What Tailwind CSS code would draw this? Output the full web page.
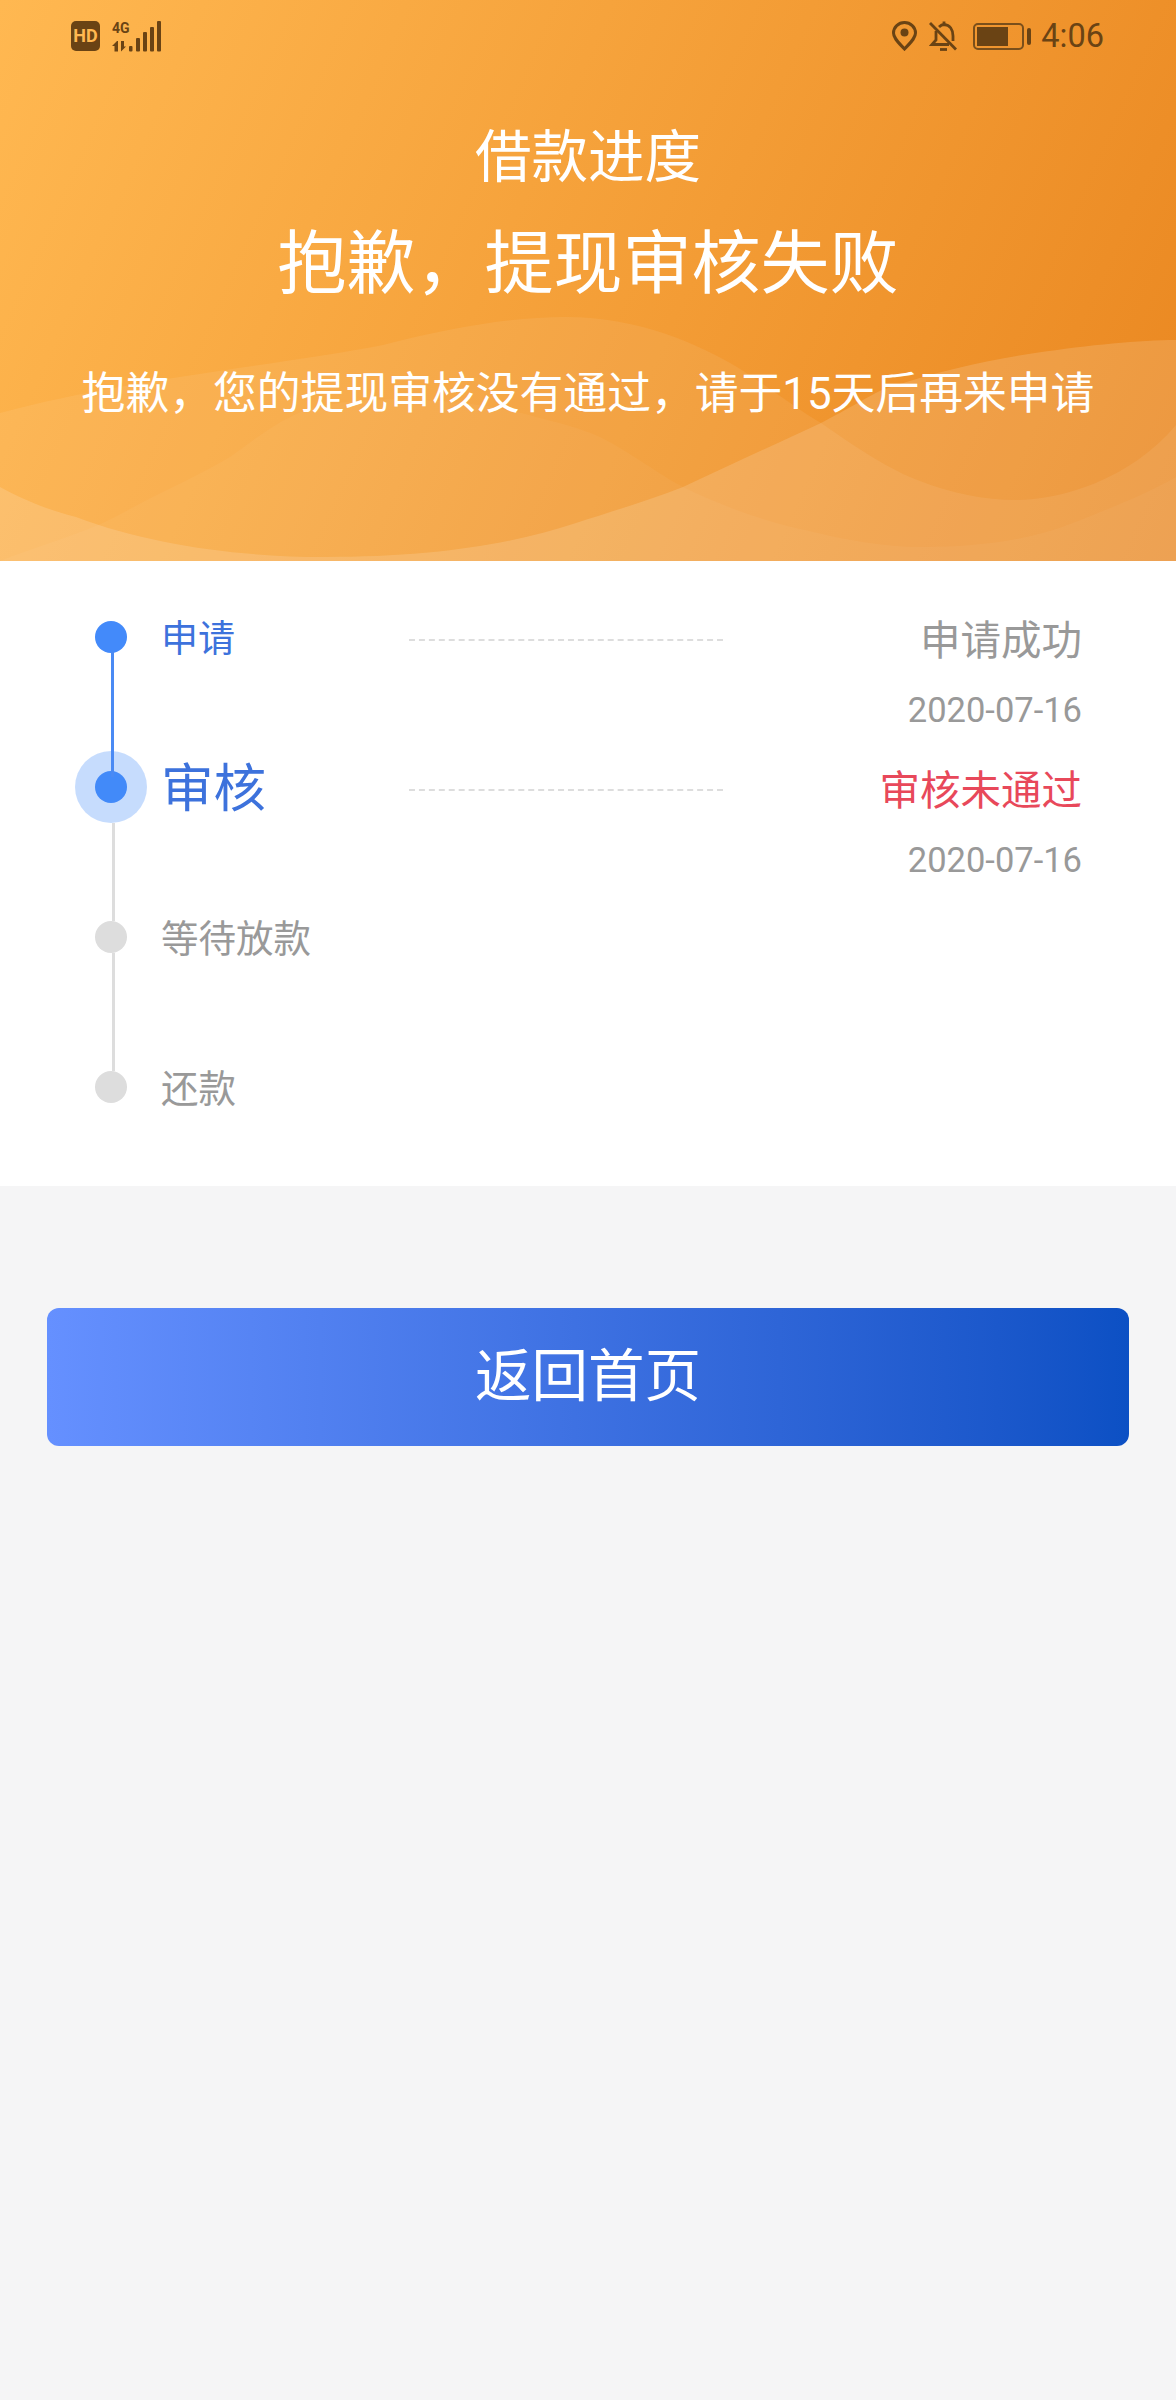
<!DOCTYPE html>
<html>
<head>
<meta charset="utf-8">
<script src="https://cdn.jsdelivr.net/npm/@tailwindcss/browser@4"></script>
</head>
<body class="bg-[#f5f5f6] font-['Roboto','Noto_Sans_CJK_SC',sans-serif]">
<div class="w-[1176px] h-[2400px] flex flex-col">

    <!-- header -->
    <div class="relative h-[561px] overflow-hidden bg-linear-[114deg] from-[#ffb851] to-[#ea8720] shrink-0">
        <svg class="absolute inset-0" width="1176" height="561" viewBox="0 0 1176 561" fill="#ffffff">
            <path fill-opacity="0.07" d="M0 413C120 380 280 365 383 345C450 328 510 317 566 317C640 317 700 345 737 367C770 388 795 408 821 423C860 450 890 470 920 481C950 493 985 500 1016 500C1060 500 1130 480 1176 425V561H0Z"/>
            <path fill-opacity="0.14" d="M0 487C30 503 50 510 76 517C150 545 240 557 325 557C430 557 510 545 576 523C610 512 650 500 683 487C730 465 780 442 821 423C850 408 865 398 882 390C940 370 990 360 1035 353C1090 345 1140 340 1176 340V561H0Z"/>
            <path fill-opacity="0.04" d="M0 561C40 545 80 535 115 517C160 492 195 478 230 457C260 435 280 420 306 410C340 400 380 398 421 400C470 402 505 408 536 417C560 423 580 428 600 437C630 452 655 472 683 487C720 505 765 522 805 530C845 540 885 547 920 547C980 547 1030 540 1073 523C1110 508 1145 495 1176 477V561H0Z"/>
        </svg>

        <!-- status bar -->
        <div class="relative flex items-center justify-between h-[72px] pl-[71px] pr-[72px] text-[#6a4314]">
            <div class="flex items-center gap-[12px]">
                <div class="w-[29px] h-[30px] rounded-[5px] bg-[#6a4314] text-[#ffb851] text-[18px] font-bold leading-[30px] text-center">HD</div>
                <svg width="50" height="31" viewBox="0 0 50 31" fill="#6a4314">
                    <text x="0" y="12" font-size="14" font-weight="700" font-family="Roboto">4G</text>
                    <path d="M5 20l-5 5h2.500v5.500h3.500V20zM9 20v10.500l5-5h-2V20z"/>
                    <rect x="17" y="25" width="3.500" height="5.500" rx="1"/>
                    <rect x="24" y="17" width="4" height="13.500" rx="1"/>
                    <rect x="31" y="11" width="4" height="19.500" rx="1"/>
                    <rect x="38" y="6" width="4" height="24.500" rx="1"/>
                    <rect x="45" y="0" width="4" height="30.500" rx="1"/>
                </svg>
            </div>
            <div class="flex items-center">
                <svg width="25" height="30" viewBox="0 0 25 30" fill="none" stroke="#6a4314" stroke-width="3"><path d="M12.500 28C6 21 1.500 17 1.500 12a11 10.500 0 0 1 22 0c0 5-4.500 9-11 16z"/><circle cx="12.500" cy="11.500" r="4" fill="#6a4314" stroke="none"/></svg>
                <svg class="ml-[12px]" width="28" height="31" viewBox="0 0 28 31" fill="none" stroke="#6a4314" stroke-width="2.800"><path d="M7 10v9l-4 4.500h17"/><path d="M10 6C12 4 14 3.500 15 3.500C21 4 24 9 24 15v5"/><path d="M15 0.500v3"/><path d="M11 28.500h7"/><path d="M1 2l26 26.500"/></svg>
                <div class="ml-[16px] w-[51px] h-[27px] border-2 border-[#7a4f1b] rounded-[5px] p-[2px]">
                    <div class="w-[31px] h-full bg-[#6a4314]"></div>
                </div>
                <div class="ml-[3px] w-[4px] h-[17px] rounded-full bg-[#6a4314]"></div>
                <span class="ml-[10px] text-[32.5px] leading-none">4:06</span>
            </div>
        </div>

        <!-- heading -->
        <div class="relative flex flex-col items-center text-white">
            <h1 class="mt-[50px] text-[56.5px] leading-[72px]">借款进度</h1>
            <h2 class="mt-[28px] text-[69px] leading-[86px]">抱歉，提现审核失败</h2>
            <p class="mt-[58px] text-[43.8px] leading-[56px]">抱歉，您的提现审核没有通过，请于15天后再来申请</p>
        </div>
    </div>

    <!-- progress steps -->
    <div class="bg-white pb-[25px] shrink-0">
        <!-- step 1 -->
        <div class="relative h-[150px] flex pl-[95px] pr-[94px]">
            <div class="absolute z-10 left-[111px] top-[91px] w-[3px] h-[125px] bg-[#4a8af4]"></div>
            <div class="w-[66px] shrink-0 pt-[60px]"><div class="w-[32px] h-[32px] rounded-full bg-[#438afa]"></div></div>
            <div class="w-[248px] shrink-0 text-[37px] leading-[50px] pt-[54px] text-[#3d72dc]">申请</div>
            <div class="w-[314px] shrink-0 pt-[78px]"><div class="border-t-2 border-dashed border-[#dddddd]"></div></div>
            <div class="flex-1 flex flex-col items-end pt-[54px]">
                <div class="text-[40.5px] leading-[52px] text-[#999999]">申请成功</div>
                <div class="mt-[21px] text-[34.5px] leading-[44px] text-[#999999]">2020-07-16</div>
            </div>
        </div>
        <!-- step 2 -->
        <div class="relative h-[150px] flex pl-[95px] pr-[94px]">
            <div class="absolute left-[112px] top-[112px] w-[3px] h-[98px] bg-[#dddddd]"></div>
            <div class="w-[66px] shrink-0 pt-[60px]">
                <div class="relative w-[32px] h-[32px] rounded-full bg-[#438afa]">
                    <div class="absolute -inset-[20px] rounded-full bg-[#438afa]/30"></div>
                </div>
            </div>
            <div class="w-[248px] shrink-0 text-[52.5px] leading-[64px] pt-[46px] text-[#3d72dc]">审核</div>
            <div class="w-[314px] shrink-0 pt-[78px]"><div class="border-t-2 border-dashed border-[#dddddd]"></div></div>
            <div class="flex-1 flex flex-col items-end pt-[54px]">
                <div class="text-[40.5px] leading-[52px] text-[#e8485a]">审核未通过</div>
                <div class="mt-[21px] text-[34.5px] leading-[44px] text-[#999999]">2020-07-16</div>
            </div>
        </div>
        <!-- step 3 -->
        <div class="relative h-[150px] flex pl-[95px] pr-[94px]">
            <div class="absolute left-[112px] top-[92px] w-[3px] h-[118px] bg-[#dddddd]"></div>
            <div class="w-[66px] shrink-0 pt-[60px]"><div class="w-[32px] h-[32px] rounded-full bg-[#dddddd]"></div></div>
            <div class="text-[37.5px] leading-[50px] pt-[53px] text-[#999999]">等待放款</div>
        </div>
        <!-- step 4 -->
        <div class="relative h-[150px] flex pl-[95px] pr-[94px]">
            <div class="w-[66px] shrink-0 pt-[60px]"><div class="w-[32px] h-[32px] rounded-full bg-[#dddddd]"></div></div>
            <div class="text-[37.5px] leading-[50px] pt-[53px] text-[#999999]">还款</div>
        </div>
    </div>

    <!-- button -->
    <div class="px-[47px] pt-[122px]">
        <button class="w-full h-[138px] rounded-[12px] bg-gradient-to-r from-[#6590ff] to-[#0c50c4] text-white text-[56.5px]">返回首页</button>
    </div>
</div>
</body>
</html>
